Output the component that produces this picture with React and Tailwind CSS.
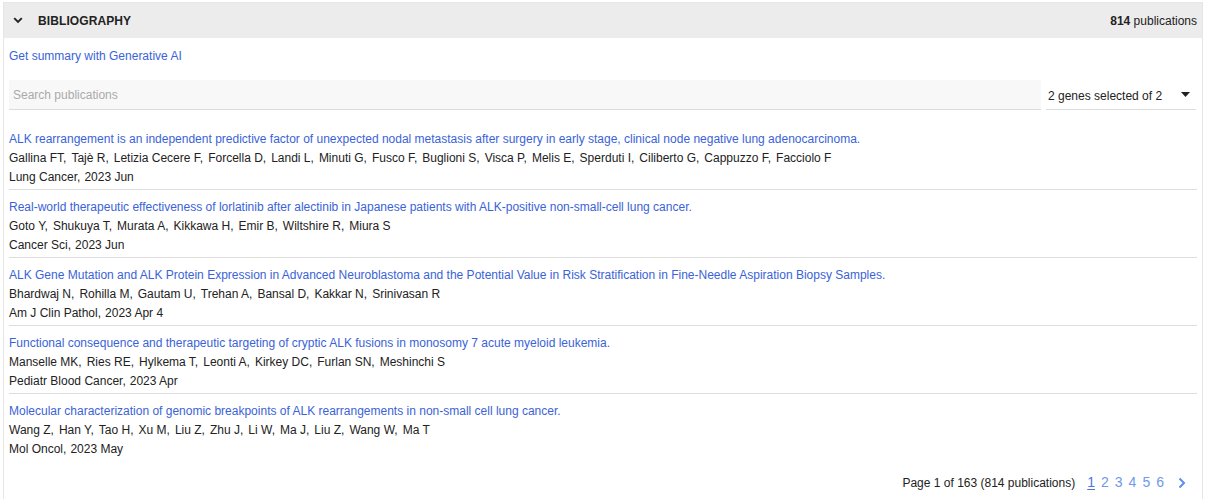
import React from "react";

const pubs = [
  {
    title:
      "ALK rearrangement is an independent predictive factor of unexpected nodal metastasis after surgery in early stage, clinical node negative lung adenocarcinoma.",
    authors: ["Gallina FT", "Tajè R", "Letizia Cecere F", "Forcella D", "Landi L", "Minuti G", "Fusco F", "Buglioni S", "Visca P", "Melis E", "Sperduti I", "Ciliberto G", "Cappuzzo F", "Facciolo F"],
    journal: "Lung Cancer",
    date: "2023 Jun",
  },
  {
    title:
      "Real-world therapeutic effectiveness of lorlatinib after alectinib in Japanese patients with ALK-positive non-small-cell lung cancer.",
    authors: ["Goto Y", "Shukuya T", "Murata A", "Kikkawa H", "Emir B", "Wiltshire R", "Miura S"],
    journal: "Cancer Sci",
    date: "2023 Jun",
  },
  {
    title:
      "ALK Gene Mutation and ALK Protein Expression in Advanced Neuroblastoma and the Potential Value in Risk Stratification in Fine-Needle Aspiration Biopsy Samples.",
    authors: ["Bhardwaj N", "Rohilla M", "Gautam U", "Trehan A", "Bansal D", "Kakkar N", "Srinivasan R"],
    journal: "Am J Clin Pathol",
    date: "2023 Apr 4",
  },
  {
    title:
      "Functional consequence and therapeutic targeting of cryptic ALK fusions in monosomy 7 acute myeloid leukemia.",
    authors: ["Manselle MK", "Ries RE", "Hylkema T", "Leonti A", "Kirkey DC", "Furlan SN", "Meshinchi S"],
    journal: "Pediatr Blood Cancer",
    date: "2023 Apr",
  },
  {
    title:
      "Molecular characterization of genomic breakpoints of ALK rearrangements in non-small cell lung cancer.",
    authors: ["Wang Z", "Han Y", "Tao H", "Xu M", "Liu Z", "Zhu J", "Li W", "Ma J", "Liu Z", "Wang W", "Ma T"],
    journal: "Mol Oncol",
    date: "2023 May",
  },
];

export default function App() {
  return (
    <div
      className="w-[1206px] h-[499px] overflow-hidden bg-white pt-[2px] pl-[3px] pr-[3px] text-[12px] text-[#222]"
      style={{ fontFamily: '"Liberation Sans", Arial, sans-serif' }}
    >
      <div className="border border-[#e6e6e6] h-[520px]">
        {/* Header */}
        <div className="h-[35px] bg-[#ececec] flex items-center pl-[9px] pr-[5px]">
          <svg width="10" height="7" viewBox="0 0 10 7" className="mr-[15px]">
            <path d="M1.2 1.2 L5 5 L8.8 1.2" fill="none" stroke="#222" strokeWidth="1.9" />
          </svg>
          <span className="font-bold text-[12px] tracking-[0.1px] text-[#222]">BIBLIOGRAPHY</span>
          <span className="ml-auto text-[12px] text-[#222]">
            <span className="font-bold">814</span> publications
          </span>
        </div>

        <div className="px-[5px]">
          <div className="pt-[11px] h-[42px] leading-[14px] text-[#3a63d8]">Get summary with Generative AI</div>

          {/* Search row */}
          <div className="flex items-end">
            <div className="w-[1032px] h-[30px] bg-[#f8f8f8] border-b border-[#dcdcdc] flex items-center pl-[4px] text-[#aaa]">
              Search publications
            </div>
            <div className="ml-[5px] w-[150px] h-[30px] border-b border-[#dcdcdc] flex items-center pl-[2px] pr-[6px] text-[#222]">
              <span className="pt-[2px]">2 genes selected of 2</span>
              <svg width="9" height="5" viewBox="0 0 9 5" className="ml-auto">
                <path d="M0 0 L9 0 L4.5 5 Z" fill="#222" />
              </svg>
            </div>
          </div>

          {/* Publications */}
          <div className="mt-[12px]">
            {pubs.map((p, i) => (
              <div
                key={i}
                className={
                  "pt-[8px] pb-[2px] leading-[19px] " +
                  (i < pubs.length - 1 ? "border-b border-[#dedede]" : "")
                }
              >
                <div className="text-[#3a63d8]">{p.title}</div>
                <div className="flex gap-x-[5px]">
                  {p.authors.map((a, j) => (
                    <span key={j}>
                      {a}
                      {j < p.authors.length - 1 ? "," : ""}
                    </span>
                  ))}
                </div>
                <div className="flex gap-x-[4px]">
                  <span>{p.journal},</span>
                  <span>{p.date}</span>
                </div>
              </div>
            ))}
          </div>

          {/* Pagination */}
          <div className="flex items-center justify-end mt-[11px] pr-[11px]">
            <span className="text-[12px] text-[#222] mr-[12px]">Page 1 of 163 (814 publications)</span>
            <div className="flex items-center gap-x-[6px] text-[14px] text-[#6f98ee]">
              <span className="underline underline-offset-2 text-[#4a74e0]">1</span>
              <span>2</span>
              <span>3</span>
              <span>4</span>
              <span>5</span>
              <span>6</span>
              <svg width="8" height="12" viewBox="0 0 8 12" className="ml-[8px]">
                <path d="M1.5 1.5 L6 6 L1.5 10.5" fill="none" stroke="#5c8df0" strokeWidth="2" />
              </svg>
            </div>
          </div>
        </div>
      </div>
    </div>
  );
}
